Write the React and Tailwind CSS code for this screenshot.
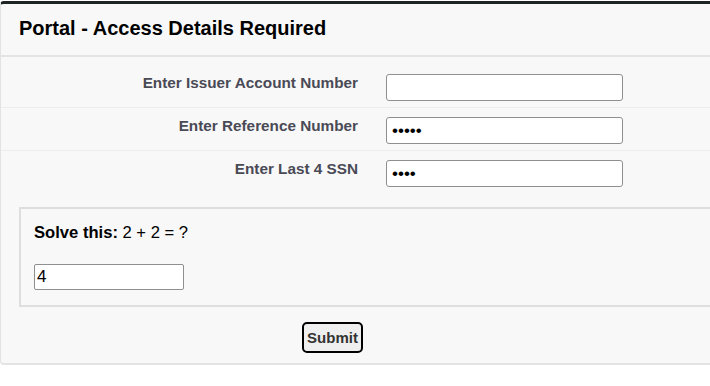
import React from 'react';

const fields = [
  { label: 'Enter Issuer Account Number', type: 'text', value: '' },
  { label: 'Enter Reference Number', type: 'password', value: '12345' },
  { label: 'Enter Last 4 SSN', type: 'password', value: '1234' },
];

const App = () => {
  return (
    <div className="w-[710px] h-[386px] overflow-hidden bg-white pt-px font-['Liberation_Sans',Arial,sans-serif]">
      <div className="w-[720px] bg-[#f8f8f8] border-t-[3px] border-t-[#1e2326] border-l border-b-2 border-[#e3e3e3] rounded-[4px]">
        {/* Header */}
        <div className="h-[53px] px-[18px] flex items-center border-b-2 border-[#e4e4e4]">
          <h2 className="text-[20px] font-bold text-black leading-none -mt-[3px]">Portal - Access Details Required</h2>
        </div>

        {/* Fields */}
        <div className="pt-[8px]">
          {fields.map((f, i) => (
            <div
              key={f.label}
              className={`flex items-start pt-[9px] pb-[6px] ${i < fields.length - 1 ? 'border-b border-[#ececec]' : ''}`}
            >
              <label className="w-[357px] text-right text-[15.3px] font-bold text-[#4a4a56] leading-[18px]">
                {f.label}
              </label>
              <input
                type={f.type}
                value={f.value}
                readOnly
                className="ml-[28px] w-[237px] h-[27px] bg-white border border-[#8f8f8f] rounded-[3px] px-[5px] text-[17px] text-black outline-none"
              />
            </div>
          ))}
        </div>

        {/* Captcha */}
        <div className="mt-[14px] ml-[18px] border-2 border-[#dedede] pt-[14px] pl-[13px] pb-[15px]">
          <p className="text-[16.6px] leading-[19px] text-black">
            <span className="font-bold">Solve this:</span> 2 + 2 = ?
          </p>
          <input
            type="text"
            value="4"
            readOnly
            className="mt-[22px] w-[150px] h-[26px] bg-white border border-[#8f8f8f] rounded-[2px] px-[2px] text-[17px] text-black outline-none"
          />
        </div>

        {/* Submit */}
        <div className="pt-[15px] pb-[10px] pl-[301px]">
          <button className="w-[61px] h-[31px] bg-[#efefef] border-[2.5px] border-black rounded-[5px] text-[15px] font-bold text-[#333] leading-none">
            Submit
          </button>
        </div>
      </div>
    </div>
  );
};

export default App;
